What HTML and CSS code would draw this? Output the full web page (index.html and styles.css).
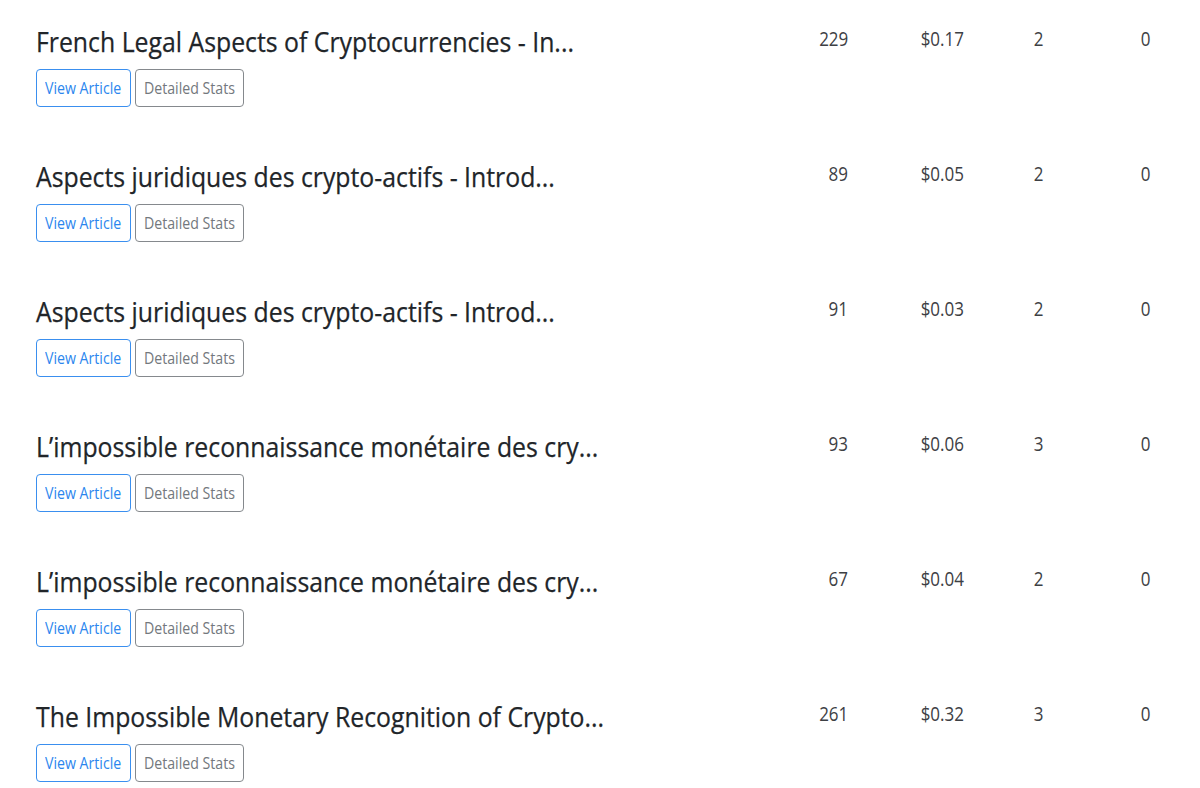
FILE: index.html
```html
<!DOCTYPE html>
<html lang="en">
<head>
<meta charset="utf-8">
<title>Articles</title>
<link rel="stylesheet" href="styles.css">
</head>
<body>
<div class="list">
  <div class="row">
    <div class="info">
      <h3 class="title"><span class="txt">French Legal Aspects of Cryptocurrencies - In...</span></h3>
      <div class="actions"><a class="btn btn-primary"><span class="btxt">View Article</span></a><a class="btn btn-secondary"><span class="btxt">Detailed Stats</span></a></div>
    </div>
    <div class="num"><span class="ntxt">229</span></div><div class="num"><span class="ntxt">$0.17</span></div><div class="num"><span class="ntxt">2</span></div><div class="num"><span class="ntxt">0</span></div>
  </div>
  <div class="row">
    <div class="info">
      <h3 class="title"><span class="txt">Aspects juridiques des crypto-actifs - Introd...</span></h3>
      <div class="actions"><a class="btn btn-primary"><span class="btxt">View Article</span></a><a class="btn btn-secondary"><span class="btxt">Detailed Stats</span></a></div>
    </div>
    <div class="num"><span class="ntxt">89</span></div><div class="num"><span class="ntxt">$0.05</span></div><div class="num"><span class="ntxt">2</span></div><div class="num"><span class="ntxt">0</span></div>
  </div>
  <div class="row">
    <div class="info">
      <h3 class="title"><span class="txt">Aspects juridiques des crypto-actifs - Introd...</span></h3>
      <div class="actions"><a class="btn btn-primary"><span class="btxt">View Article</span></a><a class="btn btn-secondary"><span class="btxt">Detailed Stats</span></a></div>
    </div>
    <div class="num"><span class="ntxt">91</span></div><div class="num"><span class="ntxt">$0.03</span></div><div class="num"><span class="ntxt">2</span></div><div class="num"><span class="ntxt">0</span></div>
  </div>
  <div class="row">
    <div class="info">
      <h3 class="title"><span class="txt">L’impossible reconnaissance monétaire des cry...</span></h3>
      <div class="actions"><a class="btn btn-primary"><span class="btxt">View Article</span></a><a class="btn btn-secondary"><span class="btxt">Detailed Stats</span></a></div>
    </div>
    <div class="num"><span class="ntxt">93</span></div><div class="num"><span class="ntxt">$0.06</span></div><div class="num"><span class="ntxt">3</span></div><div class="num"><span class="ntxt">0</span></div>
  </div>
  <div class="row">
    <div class="info">
      <h3 class="title"><span class="txt">L’impossible reconnaissance monétaire des cry...</span></h3>
      <div class="actions"><a class="btn btn-primary"><span class="btxt">View Article</span></a><a class="btn btn-secondary"><span class="btxt">Detailed Stats</span></a></div>
    </div>
    <div class="num"><span class="ntxt">67</span></div><div class="num"><span class="ntxt">$0.04</span></div><div class="num"><span class="ntxt">2</span></div><div class="num"><span class="ntxt">0</span></div>
  </div>
  <div class="row">
    <div class="info">
      <h3 class="title"><span class="txt">The Impossible Monetary Recognition of Crypto...</span></h3>
      <div class="actions"><a class="btn btn-primary"><span class="btxt">View Article</span></a><a class="btn btn-secondary"><span class="btxt">Detailed Stats</span></a></div>
    </div>
    <div class="num"><span class="ntxt">261</span></div><div class="num"><span class="ntxt">$0.32</span></div><div class="num"><span class="ntxt">3</span></div><div class="num"><span class="ntxt">0</span></div>
  </div>
</div>
</body>
</html>
```

FILE: styles.css
```css
html, body {
  margin: 0;
  padding: 0;
  background: #ffffff;
}
body {
  font-family: "Open Sans", "Noto Sans", sans-serif;
  color: #212529;
  width: 1200px;
  height: 788px;
  overflow: hidden;
}
.list {
  padding: 0 50px 0 36px;
}
.row {
  display: grid;
  grid-template-columns: 1fr 100px 116px 79px 107px;
  align-items: start;
  height: 135px;
  box-sizing: border-box;
  padding-top: 24px;
}
.title {
  margin: 0 0 11px 0;
  font-size: 28px;
  font-weight: 500;
  line-height: 34px;
  color: #212529;
  white-space: nowrap;
}
.txt {
  display: inline-block;
  transform: scaleX(0.886);
  transform-origin: left center;
  -webkit-text-stroke: 0.25px #212529;
}
.actions {
  display: flex;
  gap: 4px;
}
.btn {
  display: flex;
  align-items: center;
  justify-content: center;
  box-sizing: border-box;
  height: 38px;
  font-size: 16px;
  line-height: 24px;
  border: 1px solid;
  border-radius: 4px;
  background: #fff;
  white-space: nowrap;
  cursor: pointer;
}
.btxt {
  display: inline-block;
  transform: scaleX(0.884);
}
.btn-primary {
  width: 95px;
  color: #2b86ee;
  border-color: #3a8fef;
}
.btn-secondary {
  width: 109px;
  color: #73787d;
  border-color: #85898d;
}
.num {
  text-align: right;
  font-size: 20px;
  font-weight: 400;
  line-height: 30px;
  color: #3d4044;
}
.ntxt {
  display: inline-block;
  transform: scaleX(0.85);
  transform-origin: right center;
}
```
